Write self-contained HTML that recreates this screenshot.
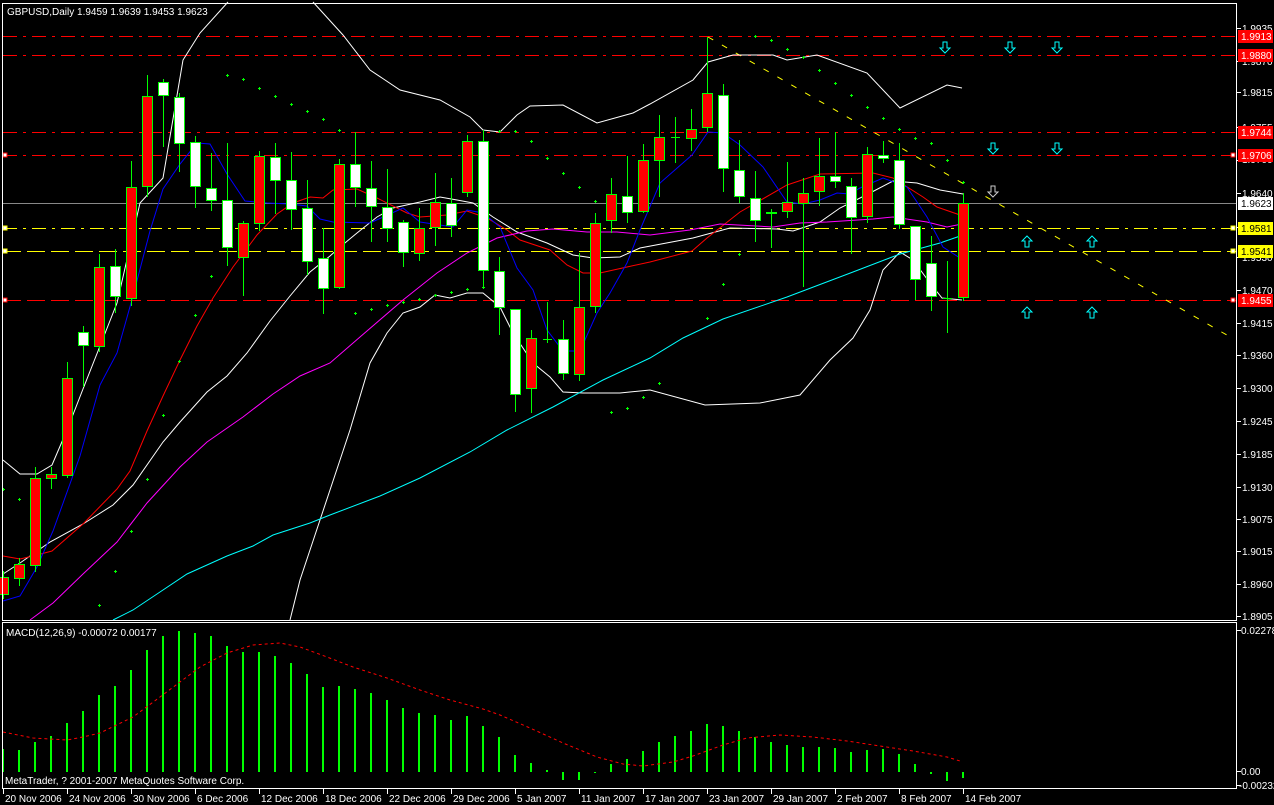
<!DOCTYPE html>
<html><head><meta charset="utf-8">
<style>
html,body{margin:0;padding:0;background:#000;width:1274px;height:805px;overflow:hidden}
svg{display:block}
text{font-family:"Liberation Sans","DejaVu Sans",sans-serif;font-size:10px;fill:#fff}
</style></head><body>
<svg id="s" width="1274" height="805" viewBox="0 0 1274 805" xmlns="http://www.w3.org/2000/svg" shape-rendering="crispEdges">
<rect width="1274" height="805" fill="#000"/>
<g id="g"></g>
<rect x="2.5" y="3.5" width="1234" height="617" fill="none" stroke="#fff"/>
<rect x="2.5" y="622.5" width="1234" height="166" fill="none" stroke="#fff"/>
<text x="7" y="15">GBPUSD,Daily  1.9459 1.9639 1.9453 1.9623</text>
<text x="6" y="636">MACD(12,26,9) -0.00072 0.00177</text>
<text x="5" y="784">MetaTrader, ? 2001-2007 MetaQuotes Software Corp.</text>
<g>
<text x="1242" y="32">1.9935</text>
<text x="1242" y="65">1.9870</text>
<text x="1242" y="96">1.9815</text>
<text x="1242" y="131">1.9755</text>
<text x="1242" y="163">1.9700</text>
<text x="1242" y="197">1.9640</text>
<text x="1242" y="231">1.9580</text>
<text x="1242" y="261">1.9530</text>
<text x="1242" y="294">1.9470</text>
<text x="1242" y="327">1.9415</text>
<text x="1242" y="359">1.9360</text>
<text x="1242" y="392">1.9300</text>
<text x="1242" y="425">1.9245</text>
<text x="1242" y="458">1.9185</text>
<text x="1242" y="491">1.9130</text>
<text x="1242" y="523">1.9075</text>
<text x="1242" y="555">1.9015</text>
<text x="1242" y="588">1.8960</text>
<text x="1242" y="620">1.8905</text>
<text x="1241" y="634">0.02278</text>
<text x="1241" y="775">0.00</text>
<text x="1239" y="789">-0.00232</text>
</g>
<g>
<text x="5" y="802">20 Nov 2006</text>
<text x="69" y="802">24 Nov 2006</text>
<text x="133" y="802">30 Nov 2006</text>
<text x="197" y="802">6 Dec 2006</text>
<text x="261" y="802">12 Dec 2006</text>
<text x="325" y="802">18 Dec 2006</text>
<text x="389" y="802">22 Dec 2006</text>
<text x="453" y="802">29 Dec 2006</text>
<text x="517" y="802">5 Jan 2007</text>
<text x="581" y="802">11 Jan 2007</text>
<text x="645" y="802">17 Jan 2007</text>
<text x="709" y="802">23 Jan 2007</text>
<text x="773" y="802">29 Jan 2007</text>
<text x="837" y="802">2 Feb 2007</text>
<text x="901" y="802">8 Feb 2007</text>
<text x="965" y="802">14 Feb 2007</text>
</g>
<rect x="1238" y="30" width="35" height="13" fill="#f00"/><text x="1241" y="40">1.9913</text>
<rect x="1238" y="49" width="35" height="13" fill="#f00"/><text x="1241" y="59">1.9880</text>
<rect x="1238" y="126" width="35" height="13" fill="#f00"/><text x="1241" y="136">1.9744</text>
<rect x="1238" y="149" width="35" height="13" fill="#f00"/><text x="1241" y="159">1.9706</text>
<rect x="1238" y="197" width="35" height="13" fill="#fff"/><text x="1241" y="207" style="fill:#000">1.9623</text>
<rect x="1238" y="222" width="35" height="13" fill="#ff0"/><text x="1241" y="232" style="fill:#000">1.9581</text>
<rect x="1238" y="245" width="35" height="13" fill="#ff0"/><text x="1241" y="255" style="fill:#000">1.9541</text>
<rect x="1238" y="294" width="35" height="13" fill="#f00"/><text x="1241" y="304">1.9455</text>
</svg>
<script>
var NS="http://www.w3.org/2000/svg",G=document.getElementById('g');
function el(t,a){var e=document.createElementNS(NS,t);for(var k in a)e.setAttribute(k,a[k]);G.appendChild(e);return e;}
function pl(pts,col,extra){var a={points:pts,fill:'none',stroke:col,'stroke-width':1,'shape-rendering':'auto'};for(var k in extra)a[k]=extra[k];el('polyline',a);}
[28,61,92,127,160,193,227,257,290,323,355,388,421,454,487,519,551,584,616,630,771,785].forEach(function(y){el('line',{x1:1237,x2:1241,y1:y+.5,y2:y+.5,stroke:'#fff'});});
[3,67,131,195,259,323,387,451,515,579,643,707,771,835,899,963].forEach(function(x){el('line',{x1:x+.5,x2:x+.5,y1:789,y2:794,stroke:'#fff'});});
el('line',{x1:3,x2:1236,y1:36.5,y2:36.5,stroke:'#f00','stroke-dasharray':'14 6 3 6'});
el('line',{x1:3,x2:1236,y1:55.5,y2:55.5,stroke:'#f00','stroke-dasharray':'14 6 3 6'});
el('line',{x1:3,x2:1236,y1:132.5,y2:132.5,stroke:'#f00','stroke-dasharray':'14 6 3 6'});
el('line',{x1:3,x2:1236,y1:155.5,y2:155.5,stroke:'#f00','stroke-dasharray':'14 6 3 6'});
el('line',{x1:3,x2:1236,y1:203.5,y2:203.5,stroke:'#888'});
el('line',{x1:3,x2:1236,y1:228.5,y2:228.5,stroke:'#ff0','stroke-dasharray':'14 6 3 6'});
el('line',{x1:3,x2:1236,y1:251.5,y2:251.5,stroke:'#ff0','stroke-dasharray':'18 6'});
el('line',{x1:3,x2:1236,y1:300.5,y2:300.5,stroke:'#f00','stroke-dasharray':'18 6'});
[[155,'#f00'],[228,'#ff0'],[251,'#ff0'],[300,'#f00']].forEach(function(a){
 el('rect',{x:3,y:a[0]-2,width:4,height:4,fill:'#fff',stroke:a[1]});
 el('rect',{x:1231,y:a[0]-2,width:4,height:4,fill:'#fff',stroke:a[1]});});
el('line',{x1:708,y1:37,x2:1232,y2:338,stroke:'#ff0','stroke-dasharray':'6 10','shape-rendering':'auto'});
pl('3,460 20,474 37,474 52,465 67,430 83,389 100,346 117,303 140,203 163,178 183,60 200,33 228,2','#fff');
pl('313,2 343,35 370,70 400,90 440,100 470,117 483,130 500,132 517,115 530,106 563,105 597,123 633,113 650,104 693,80 708,62 733,55 773,55 787,60 817,55 867,73 900,108 947,85 962,88','#fff');
pl('290,620 300,580 320,520 340,460 350,430 370,363 387,333 403,313 420,307 435,295 450,298 467,293 483,293 500,307 513,333 533,363 550,377 563,392 583,393 620,393 650,390 705,405 760,403 800,395 830,360 853,338 870,310 883,270 900,252 913,260 930,283 942,298 962,300','#fff');
pl('3,574 20,563 50,542 83,524 113,505 133,485 163,442 180,422 207,392 227,376 247,353 270,321 290,296 310,272 330,256 340,247 357,233 377,217 393,208 420,202 440,197 457,200 473,203 493,217 517,232 547,243 573,255 593,258 620,257 640,248 693,238 730,228 777,229 793,231 820,222 840,208 870,193 893,181 917,183 940,190 963,194','#fff');
pl('3,556 20,559 37,555 52,551 83,524 117,489 130,471 147,431 163,396 180,360 197,326 213,298 233,267 257,235 277,214 293,203 310,197 323,198 333,190 357,189 377,198 407,213 420,217 447,215 467,211 487,218 507,230 520,240 550,250 567,265 583,273 600,273 627,267 650,262 692,251 707,238 740,212 787,185 820,174 873,173 893,178 923,197 937,207 960,215','#f00');
pl('30,620 53,603 83,574 117,542 147,503 180,467 207,442 243,417 273,394 300,376 330,363 360,337 403,300 437,273 467,253 497,238 527,231 553,229 587,232 617,232 650,235 690,230 720,224 773,227 800,223 827,222 873,219 893,217 927,222 947,227 962,224','#f0f');
pl('113,620 133,610 160,592 187,574 227,556 253,546 273,535 310,523 330,515 380,496 420,478 470,452 507,430 553,407 603,380 650,358 683,338 723,319 787,297 853,272 900,254 940,243 963,235','#0ff');
pl('3,601 20,596 37,567 53,531 80,456 100,385 117,353 133,296 150,231 163,189 180,164 197,143 210,144 227,174 245,201 267,203 290,204 307,206 320,219 333,222 370,223 403,208 420,222 453,227 467,210 483,213 500,227 517,268 533,290 547,330 563,351 580,351 597,313 610,293 627,263 640,230 660,183 692,155 708,132 723,133 740,145 763,167 787,202 803,204 820,200 837,193 850,194 860,188 883,178 907,187 927,217 943,247 963,260','#00f');
var C=[[571,599,577,595,1],[558,586,564,579,1],[467,572,478,566,1],[467,489,474,479,1],[362,478,378,476,1],[326,387,332,346,0],[254,352,267,347,1],[249,313,266,297,0],[161,306,187,299,1],[75,197,96,187,1],[79,147,82,96,0],[93,172,97,144,0],[136,208,142,187,0],[153,211,188,201,0],[143,266,200,248,0],[221,296,223,258,1],[151,231,156,224,1],[143,214,157,181,0],[152,230,180,210,0],[180,275,208,262,0],[228,314,258,289,0],[159,289,164,288,1],[132,207,164,188,0],[161,242,188,207,0],[169,242,207,229,0],[220,267,222,253,0],[208,261,228,254,1],[173,246,202,228,1],[178,237,203,226,0],[135,197,141,193,1],[130,287,141,271,0],[257,335,271,308,0],[309,412,309,395,0],[330,413,338,389,1],[302,343,339,339,0],[320,380,339,374,0],[253,381,307,375,1],[213,313,223,307,1],[178,233,194,221,1],[156,223,196,213,0],[144,213,160,212,1],[115,197,137,161,1],[117,163,137,137,0],[109,151,129,139,1],[37,132,93,128,1],[84,192,95,169,0],[140,203,170,197,0],[171,242,198,221,0],[209,248,212,214,0],[162,218,202,212,1],[178,287,193,204,1],[138,206,176,192,1],[132,188,176,182,0],[178,254,186,218,0],[147,223,154,217,1],[141,163,155,159,0],[143,229,160,225,0],[226,300,226,280,0],[236,311,263,297,0],[261,333,298,298,0],[193,301,203,298,1]];
C.forEach(function(c,i){var x=3+16*i;
 el('line',{x1:x+.5,x2:x+.5,y1:c[0],y2:c[1],stroke:'#0f0'});
 var h=c[3]-c[2];
 if(h<2){el('line',{x1:x-4,x2:x+5,y1:c[2]+.5,y2:c[2]+.5,stroke:'#0f0','stroke-width':h<1?1:2});}
 else el('rect',{x:x-4.5,y:c[2]+.5,width:10,height:h-1,fill:c[4]?'#f00':'#fff',stroke:'#0f0'});
});
'3,489 19,499 99,605 115,571 131,531 147,479 163,415 179,361 195,315 211,276 227,75 243,79 259,88 275,96 291,104 307,111 323,119 339,130 355,313 371,309 387,305 403,302 419,299 435,295 451,292 467,289 483,287 499,131 515,131 531,141 547,158 563,173 579,187 595,201 611,412 627,408 643,397 659,383 707,318 723,284 739,254 755,36 771,40 787,49 803,57 819,70 835,83 851,95 867,107 883,118 899,129 915,138 931,143 947,160 963,182'.split(' ').forEach(function(p){var q=p.split(',').map(Number);
 el('path',{d:'M'+(q[0]-1)+' '+(q[1]+.5)+'h3M'+(q[0]+.5)+' '+(q[1]-1)+'v3',stroke:'#0f0'});});
function arr(x,y,up,col){var d=up?'M'+x+' '+(y-6)+' l5 5 h-3 v6 h-4 v-6 h-3 z':'M'+x+' '+(y+6)+' l5 -5 h-3 v-6 h-4 v6 h-3 z';
 el('path',{d:d,fill:'none',stroke:col,'shape-rendering':'auto'});}
[[945,47],[1010,47],[1057,47],[993,148],[1057,148]].forEach(function(a){arr(a[0],a[1],0,'#0ff');});
arr(993,191,0,'#ccc');
[[1027,242],[1092,242],[1027,313],[1092,313]].forEach(function(a){arr(a[0],a[1],1,'#0ff');});
var M=[749,750,742,736,723,711,695,686,670,650,636,631,633,636,646,652,652,656,663,674,687,686,689,693,700,708,713,715,720,716,726,737,755,763,770,780,780,773,764,759,751,742,736,731,724,726,731,737,742,745,747,747,748,752,750,749,754,764,774,781,778];
M.forEach(function(y,i){var x=2+16*i;var y1=Math.min(y,772),y2=Math.max(y,772);if(y2-y1<1)y2=y1+1;
 el('rect',{x:x,y:y1,width:2,height:y2-y1,fill:'#0f0'});});
pl('3,732 33,738 67,740 83,737 100,733 133,717 160,697 180,682 200,667 227,653 253,645 280,643 300,647 327,657 353,667 387,678 420,690 450,700 483,709 500,715 530,728 563,743 597,757 623,764 643,766 673,762 693,756 723,745 747,738 780,735 813,737 847,741 880,746 913,751 947,757 960,761','#f00',{'stroke-dasharray':'3 3'});
</script>
</body></html>
